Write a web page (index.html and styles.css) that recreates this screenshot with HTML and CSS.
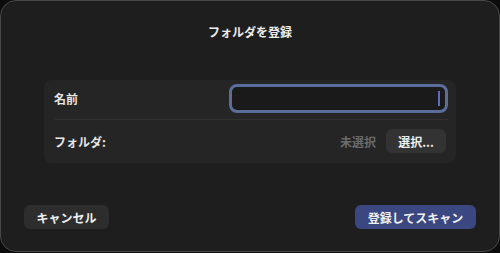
FILE: index.html
```html
<!DOCTYPE html>
<html lang="ja">
<head>
<meta charset="utf-8">
<link rel="stylesheet" href="styles.css">
</head>
<body>
<div class="window">
  <div class="title">フォルダを登録</div>
  <div class="panel">
    <div class="row">
      <span class="label">名前</span>
      <div class="input"><span class="caret"></span></div>
    </div>
    <div class="sep"></div>
    <div class="row row2">
      <span class="label">フォルダ:</span>
      <div class="right">
        <span class="muted">未選択</span>
        <button class="btn small">選択...</button>
      </div>
    </div>
  </div>
  <div class="footer">
    <button class="btn cancel">キャンセル</button>
    <button class="btn primary">登録してスキャン</button>
  </div>
</div>
</body>
</html>
```
FILE: styles.css
```css
html, body {
  margin: 0;
  padding: 0;
  background: #0c0c0c;
  width: 500px;
  height: 253px;
  overflow: hidden;
  font-family: "Noto Sans CJK JP", "Noto Sans", sans-serif;
}
.window {
  box-sizing: border-box;
  width: 500px;
  height: 252px;
  background: #1e1e1e;
  border: 1px solid #474747;
  border-radius: 16px;
  padding: 22px 23px 0 23px;
  display: flex;
  flex-direction: column;
}
.title {
  text-align: center;
  color: #ececec;
  font-size: 12px;
  font-weight: 700;
  line-height: 18px;
}
.panel {
  margin: 39px 20px 0 20px;
  background: #252525;
  border-radius: 8px;
  padding: 3px 8px 0 10px;
  height: 80px;
}
.row {
  display: flex;
  align-items: center;
  justify-content: space-between;
  height: 31px;
}
.row2 {
  height: 42px;
}
.label {
  color: #e6e6e6;
  font-size: 12px;
  font-weight: 700;
}
.input {
  box-sizing: border-box;
  width: 219px;
  height: 29px;
  border: 3px solid #5b6d9a;
  border-radius: 8px;
  background: #1a1a1a;
  display: flex;
  align-items: center;
  justify-content: flex-end;
  padding-right: 5px;
}
.caret {
  width: 2px;
  height: 15px;
  background: #5a6ad0;
}
.sep {
  height: 1px;
  background: #323232;
  margin: 5px 0 0 1px;
}
.right {
  display: flex;
  align-items: center;
  gap: 10px;
  margin-right: 2px;
}
.muted {
  color: #6a6a6a;
  font-size: 12px;
  font-weight: 700;
}
.btn {
  font-family: inherit;
  border: none;
  color: #efefef;
  font-size: 12px;
  font-weight: 700;
  border-radius: 6px;
  padding: 0;
}
.small {
  width: 60px;
  height: 24px;
  background: #333333;
}
.footer {
  display: flex;
  justify-content: space-between;
  margin-top: 42px;
  padding-right: 0;
}
.cancel {
  width: 85px;
  height: 24px;
  background: #2d2d2d;
}
.primary {
  width: 121px;
  height: 24px;
  background: #3a4781;
}
```
